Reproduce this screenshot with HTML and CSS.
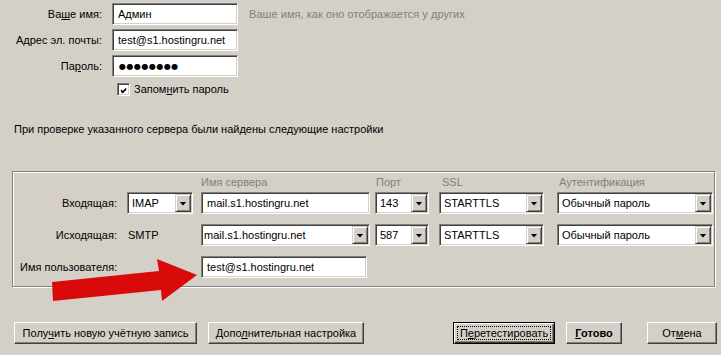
FILE: index.html
```html
<!DOCTYPE html>
<html lang="ru">
<head>
<meta charset="utf-8">
<link rel="stylesheet" href="styles.css">
</head>
<body>
<div class="page">
  <div class="account">
    <label class="lbl">Ва<u>ш</u>е имя:</label>
    <div class="field">Админ</div>
    <div class="hint">Ваше имя, как оно отображается у других</div>
    <label class="lbl">А<u>д</u>рес эл. почты:</label>
    <div class="field">test@s1.hostingru.net</div>
    <div></div>
    <label class="lbl">Па<u>р</u>оль:</label>
    <div class="field pw">●●●●●●●●</div>
    <div></div>
  </div>

  <div class="remember">
    <span class="check"><svg width="9" height="9" viewBox="0 0 9 9"><polygon points="1,3 3,5 7,1 7,4 3,8 1,6" fill="#000"/></svg></span>
    <span>Запом<u>н</u>ить пароль</span>
  </div>

  <p class="info">При проверке указанного сервера были найдены следующие настройки</p>

  <div class="frame">
    <div class="cols head">
      <span></span><span></span>
      <span>Имя сервера</span>
      <span>Порт</span>
      <span>SSL</span>
      <span>Аутентификация</span>
    </div>
    <div class="cols rows">
      <span class="rlbl">Входящая:</span>
      <div class="combo w-proto"><span class="val">IMAP</span><span class="drop"></span></div>
      <div class="field w-server">mail.s1.hostingru.net</div>
      <div class="combo w-port"><span class="val">143</span><span class="drop"></span></div>
      <div class="combo w-ssl"><span class="val v4">STARTTLS</span><span class="drop"></span></div>
      <div class="combo w-auth"><span class="val">Обычный пароль</span><span class="drop"></span></div>

      <span class="rlbl">Исходящая:</span>
      <span class="smtp">SMTP</span>
      <div class="combo w-server"><span class="val v1">mail.s1.hostingru.net</span><span class="drop"></span></div>
      <div class="combo w-port"><span class="val">587</span><span class="drop"></span></div>
      <div class="combo w-ssl"><span class="val v4">STARTTLS</span><span class="drop"></span></div>
      <div class="combo w-auth"><span class="val">Обычный пароль</span><span class="drop"></span></div>

      <span class="ulbl">Имя пользователя:</span>
      <div class="field w-user">test@s1.hostingru.net</div>
    </div>
  </div>

  <div class="buttons">
    <div class="group">
      <button class="btn b-new">Полу<u>ч</u>ить новую учётную запись</button>
      <button class="btn b-adv">Допо<u>л</u>нительная настройка</button>
    </div>
    <div class="group">
      <button class="btn b-retest default">П<u>е</u>ретестировать</button>
      <button class="btn b-done"><u>Г</u>отово</button>
      <button class="btn b-cancel">От<u>м</u>ена</button>
    </div>
  </div>

  <svg class="arrow" width="721" height="355" viewBox="0 0 721 355">
    <polygon points="52,282 159,271 157,259 197,275 162,301 161,290 53,301" fill="#d90a0a"/>
  </svg>
</div>
</body>
</html>
```

FILE: styles.css
```css
html, body {
  margin: 0;
  padding: 0;
}
body {
  background: #d4d0c8;
  font: 11px/13px "Liberation Sans", Arial, sans-serif;
  color: #000;
}
.page {
  position: relative;
  width: 721px;
  height: 355px;
  overflow: hidden;
}
u { text-decoration: underline; }

/* account block */
.account {
  display: grid;
  grid-template-columns: 102px 126px auto;
  grid-auto-rows: 22px;
  column-gap: 10px;
  row-gap: 4px;
  padding-top: 3px;
  align-items: center;
}
.lbl { text-align: right; white-space: nowrap; }
.hint { color: #808080; padding-left: 1px; white-space: nowrap; letter-spacing: 0.05px; }

.field {
  height: 22px;
  box-sizing: border-box;
  background: #fff;
  border: 1px solid;
  border-color: #808080 #fff #fff #808080;
  box-shadow: inset 1px 1px #404040, inset -1px -1px #d4d0c8;
  padding: 0 5px;
  display: flex;
  align-items: center;
  white-space: nowrap;
}
.pw {
  font-family: "DejaVu Sans", sans-serif;
  font-size: 8px;
  letter-spacing: 0.5px;
  padding-left: 6px;
}

.remember {
  display: flex;
  align-items: center;
  gap: 4px;
  margin: 6px 0 0 117px;
}
.check {
  width: 13px;
  height: 13px;
  box-sizing: border-box;
  background: #fff;
  border: 1px solid;
  border-color: #808080 #fff #fff #808080;
  box-shadow: inset 1px 1px #404040, inset -1px -1px #d4d0c8;
  padding: 1px;
  display: flex;
}
.check svg { display: block; margin: 1px 0 0 1px; }

.info {
  margin: 27px 0 0 14px;
}

/* server frame */
.frame {
  margin: 35px 6px 0 12px;
  border: 1px solid #808080;
  box-shadow: inset 1px 1px #fff, 1px 1px #fff;
  padding: 4px 1px 8px 7px;
}
.cols {
  display: grid;
  grid-template-columns: 107px 74px 174px 64px 118px 156px;
}
.head {
  height: 13px;
  margin-bottom: 3px;
  color: #808080;
}
.head span:nth-child(4) { padding-left: 1px; }
.head span:nth-child(5) { padding-left: 3px; }
.head span:nth-child(6) { padding-left: 2px; }
.rows {
  grid-auto-rows: 22px;
  row-gap: 10px;
  align-items: center;
}
.rlbl { text-align: right; padding-right: 10px; white-space: nowrap; }
.ulbl { white-space: nowrap; grid-column: 1 / span 2; }
.smtp { padding-left: 1px; }

.combo {
  height: 22px;
  box-sizing: border-box;
  background: #fff;
  border: 1px solid;
  border-color: #808080 #fff #fff #808080;
  box-shadow: inset 1px 1px #404040, inset -1px -1px #d4d0c8;
  padding: 1px;
  display: flex;
  align-items: stretch;
}
.combo .val {
  flex: 1;
  display: flex;
  align-items: center;
  padding-left: 3px;
  white-space: nowrap;
  overflow: hidden;
}
.combo .val.v4 { padding-left: 3px; }
.combo .val.v1 { padding-left: 1px; }
.drop {
  width: 16px;
  box-sizing: border-box;
  background: #d4d0c8;
  border: 1px solid;
  border-color: #d4d0c8 #404040 #404040 #d4d0c8;
  box-shadow: inset 1px 1px #fff, inset -1px -1px #808080;
  display: flex;
  align-items: center;
  justify-content: center;
}
.drop::after {
  content: "";
  width: 7px;
  height: 4px;
  background: #000;
  clip-path: polygon(0 0, 100% 0, 50% 100%);
  margin-top: 1px;
}
.w-proto { width: 66px; }
.w-server { width: 169px; }
.w-user { width: 166px; }
.w-port { width: 54px; }
.w-ssl { width: 105px; }
.w-auth { width: 156px; }

/* buttons */
.buttons {
  display: flex;
  justify-content: space-between;
  margin: 35px 4px 0 14px;
}
.group {
  display: flex;
  gap: 11px;
}
.btn {
  position: relative;
  height: 22px;
  box-sizing: border-box;
  margin: 0;
  padding: 0;
  font: inherit;
  color: #000;
  background: #d4d0c8;
  border: 1px solid;
  border-color: #fff #404040 #404040 #fff;
  box-shadow: inset -1px -1px #808080;
  text-align: center;
  white-space: nowrap;
}
.btn.default {
  border-color: #000;
  box-shadow: inset 1px 1px #fff, inset -1px -1px #404040, inset -2px -2px #808080;
}
.btn.default::after {
  content: "";
  position: absolute;
  inset: 3px;
  border: 1px dotted #000;
}
.b-new { width: 183px; }
.b-adv { width: 156px; }
.b-retest { width: 102px; }
.b-done { width: 56px; font-weight: bold; }
.b-cancel { width: 70px; margin-left: 14px; }

.arrow {
  position: absolute;
  left: 0;
  top: 0;
  pointer-events: none;
}
```
